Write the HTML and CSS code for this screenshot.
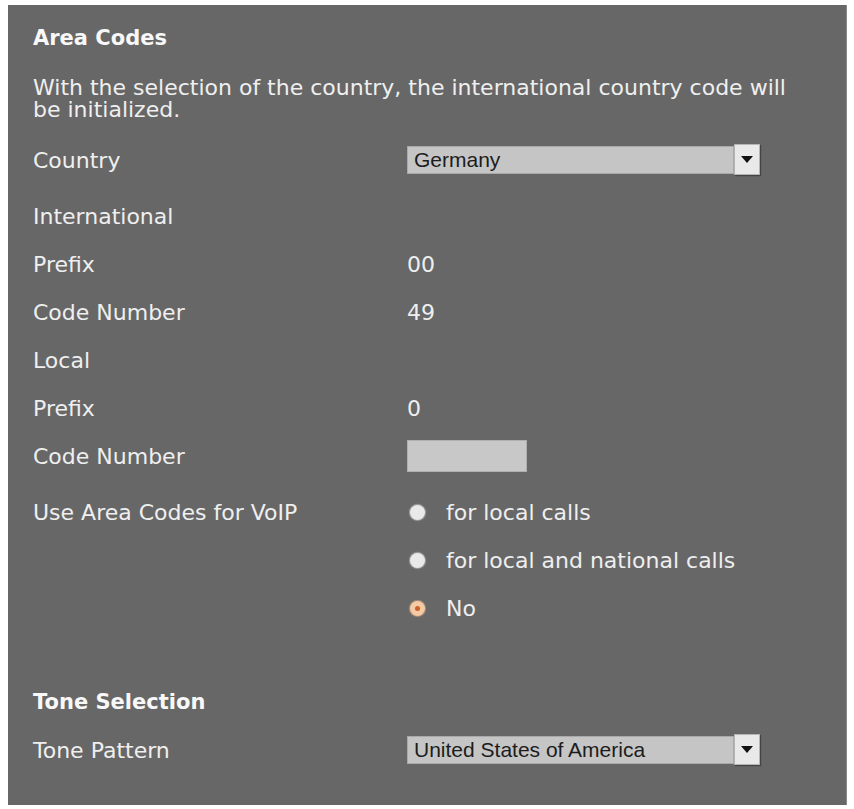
FILE: index.html
```html
<!DOCTYPE html>
<html lang="en">
<head>
  <meta charset="UTF-8">
  <title>Area Codes</title>
  <link rel="stylesheet" href="styles.css">
</head>
<body>

  <div class="panel">
    <h2 class="section-title">Area Codes</h2>
    <p class="intro">With the selection of the country, the international country code will be initialized.</p>

    <div class="row row-ctl">
      <span class="label">Country</span>
      <div class="value">
        <div class="select">
          <span class="select-text">Germany</span>
          <span class="select-btn">
            <svg width="12" height="7" viewBox="0 0 12 7"><path d="M0 0h12L6 7z" fill="#111"/></svg>
          </span>
        </div>
      </div>
    </div>

    <div class="row"><span class="label">International</span><div class="value"></div></div>
    <div class="row"><span class="label">Prefix</span><div class="value">00</div></div>
    <div class="row"><span class="label">Code Number</span><div class="value">49</div></div>
    <div class="row"><span class="label">Local</span><div class="value"></div></div>
    <div class="row"><span class="label">Prefix</span><div class="value">0</div></div>
    <div class="row row-ctl">
      <span class="label">Code Number</span>
      <div class="value"><input type="text" class="text-input"></div>
    </div>

    <div class="row">
      <span class="label">Use Area Codes for VoIP</span>
      <label class="value option"><span class="radio"></span>for local calls</label>
    </div>
    <div class="row">
      <span class="label"></span>
      <label class="value option"><span class="radio"></span>for local and national calls</label>
    </div>
    <div class="row">
      <span class="label"></span>
      <label class="value option"><span class="radio checked"></span>No</label>
    </div>

    <div class="row section-row"><h2 class="section-title">Tone Selection</h2></div>
    <div class="row">
      <span class="label">Tone Pattern</span>
      <div class="value">
        <div class="select">
          <span class="select-text">United States of America</span>
          <span class="select-btn">
            <svg width="12" height="7" viewBox="0 0 12 7"><path d="M0 0h12L6 7z" fill="#111"/></svg>
          </span>
        </div>
      </div>
    </div>
  </div>

</body>
</html>
```

FILE: styles.css
```css
* {
  box-sizing: border-box;
  margin: 0;
  padding: 0;
}

body {
  background: #fff;
  font-family: 'DejaVu Sans', Verdana, sans-serif;
}

.panel {
  width: 839px;
  height: 800px;
  margin: 5px 0 0 8px;
  padding: 21px 25px 0;
  background: #676767;
  color: #efefef;
  border-right: 1px solid #8a8a8a;
}

.section-title {
  font-size: 21px;
  font-weight: bold;
  line-height: 24px;
  color: #f8f8f8;
}

.intro {
  font-size: 22px;
  line-height: 22px;
  max-width: 780px;
  margin: 27px 0 15px;
}

.row {
  display: grid;
  grid-template-columns: 374px 1fr;
  align-items: center;
  height: 48px;
  font-size: 22px;
}

.row-ctl {
  margin-bottom: 8px;
}

.section-row {
  display: flex;
  margin-top: 46px;
}

.value {
  display: flex;
  align-items: center;
}

/* drop-down */
.select {
  display: flex;
  width: 353px;
  height: 28px;
  font-family: 'Liberation Sans', Arial, sans-serif;
  font-size: 21px;
  color: #1c1c1c;
}

.select-text {
  flex: 1;
  background: #c5c5c5;
  border: 1px solid #a9a9a9;
  padding-left: 6px;
  line-height: 26px;
}

.select-btn {
  width: 26px;
  height: 31px;
  margin-top: -2px;
  display: flex;
  align-items: center;
  justify-content: center;
  background: #e9e9e9;
  border: 1px solid #b5b5b5;
  box-shadow: 1px 1px 1px #444;
}

.text-input {
  width: 120px;
  height: 32px;
  background: #c8c8c8;
  border: 1px solid #b0b0b0;
  outline: none;
}

/* radio buttons */
.option {
  gap: 21px;
}

.radio {
  width: 15px;
  height: 15px;
  margin-left: 3px;
  border-radius: 50%;
  background: #e9e9e9;
  box-shadow: 0 0 1px 1px rgba(220, 220, 220, 0.5);
  display: flex;
  align-items: center;
  justify-content: center;
}

.radio.checked {
  background: #f4c9a4;
  box-shadow: 0 0 1px 1px rgba(240, 190, 150, 0.5);
}

.radio.checked::after {
  content: "";
  width: 5px;
  height: 5px;
  border-radius: 50%;
  background: #c7602a;
}
```
